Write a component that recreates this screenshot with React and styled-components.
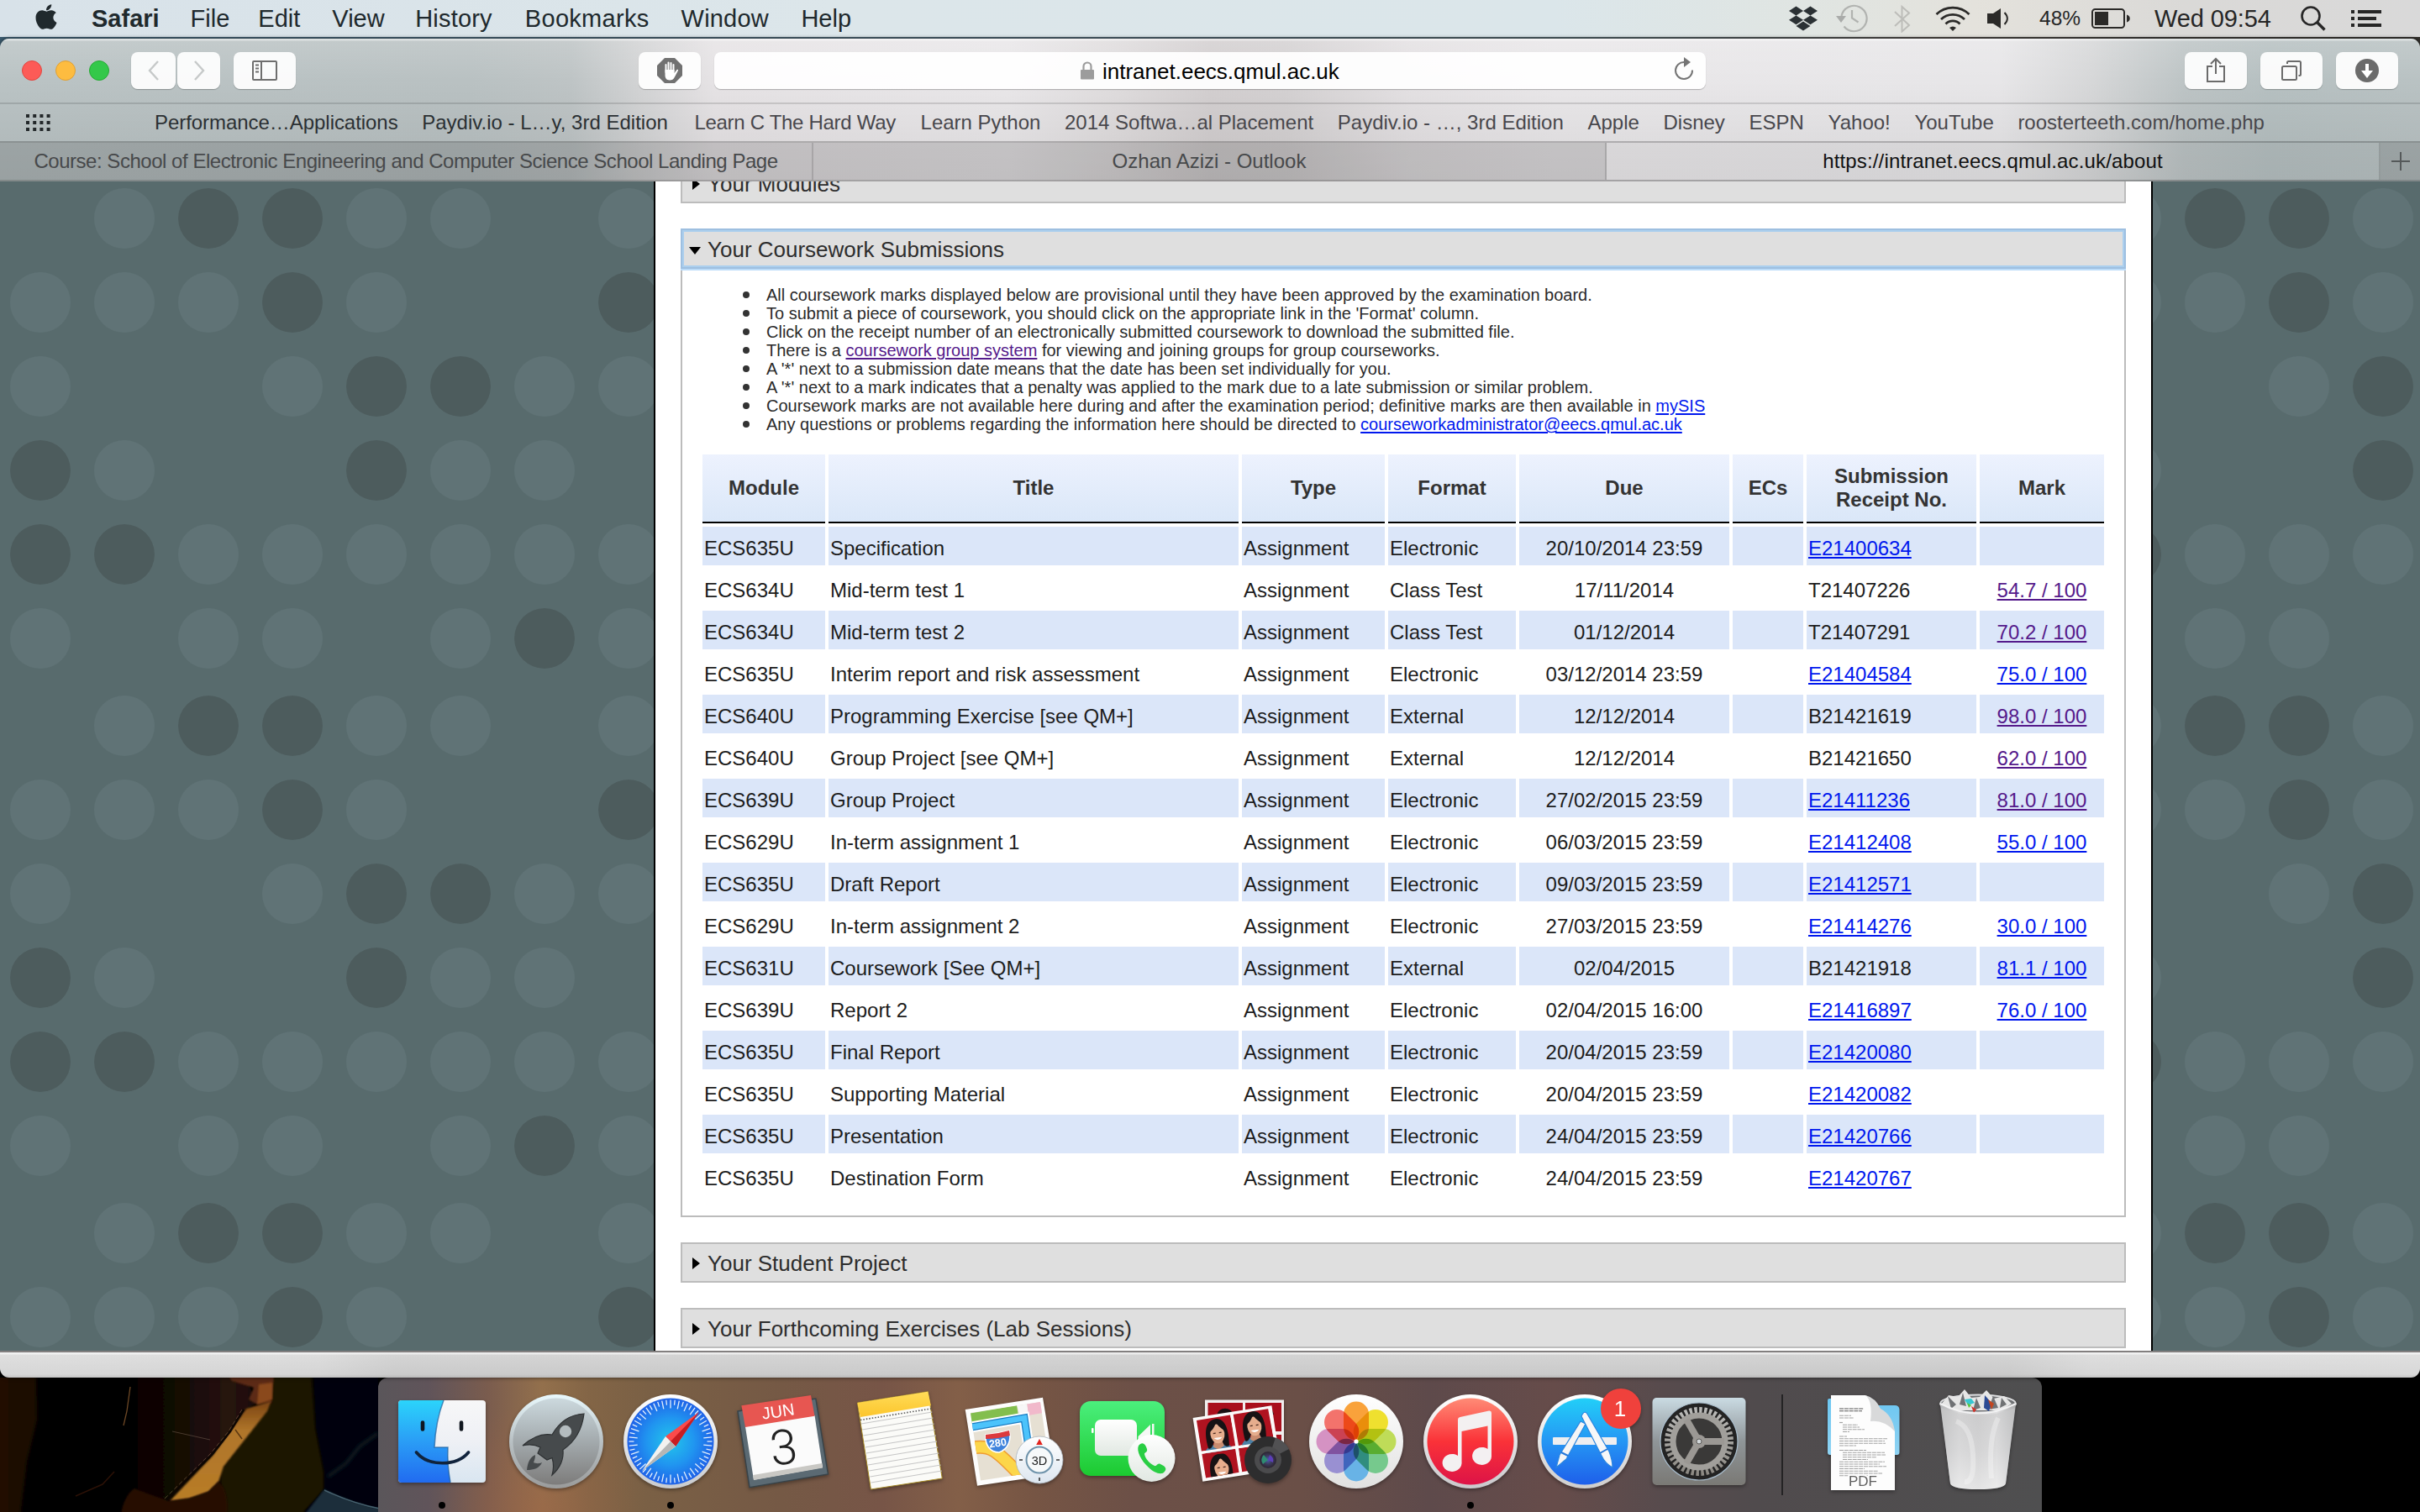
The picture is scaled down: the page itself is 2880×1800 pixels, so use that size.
import React from "react";
import styled, { createGlobalStyle, css } from "styled-components";
import { FaApple, FaDropbox } from "react-icons/fa";

const ui = `"Liberation Sans", Arial, sans-serif`;

const Global = createGlobalStyle`
  *, *::before, *::after { box-sizing: border-box; }
  html, body { margin: 0; padding: 0; }
  body { width: 2880px; height: 1800px; overflow: hidden; background: #000; font-family: ${ui}; }
`;

/* ---------- desktop ---------- */

const Desktop = styled.div`
  position: relative;
  width: 2880px;
  height: 1800px;
  display: flex;
  flex-direction: column;
  overflow: hidden;
  background: linear-gradient(90deg, #3c5c70, #4a5f6b 45%, #4c5e64 65%, #4c4743 80%, #3a3835 88%, #33312d) top / 100% 60px no-repeat, #000;
`;

const Wallpaper = styled.svg`
  position: absolute;
  left: 0;
  bottom: 0;
`;

const MenuBar = styled.header`
  display: flex;
  align-items: center;
  justify-content: space-between;
  height: 44px;
  flex: none;
  padding: 0 46px 0 42px;
  color: #20292d;
  background: linear-gradient(90deg, #d8e2e9 0, #dce6ea 1000px, #dbe6ea 1850px, #e0e5e2 2150px, #e4e2dc 2350px, #dad9d7 2600px, #d9d9d9 100%);
`;

const MenuGroup = styled.nav`
  display: flex;
  align-items: center;
`;

const AppleMark = styled(FaApple)`
  width: 30px;
  height: 34px;
  margin: -4px 0 0 -2px;
`;

const MenuItem = styled.span`
  margin-left: ${(p) => p.$gap}px;
  font-size: 29px;
  line-height: 44px;
  letter-spacing: ${(p) => p.$track || 0}px;
  font-weight: ${(p) => (p.$bold ? 700 : 400)};
`;

const StatusGroup = styled.div`
  display: flex;
  align-items: center;
  color: #262626;
  svg { display: block; flex: none; }
`;

const Battery = styled.span`
  width: 52px;
  margin: 0 10px 0 36px;
  font-size: 24.5px;
  line-height: 44px;
  white-space: nowrap;
`;

const Clock = styled.span`
  width: 139px;
  margin: 0 35px 0 29px;
  font-size: 29px;
  line-height: 44px;
  letter-spacing: -0.1px;
  white-space: nowrap;
`;

/* ---------- browser window ---------- */

const Window = styled.main`
  position: relative;
  z-index: 1;
  flex: none;
  display: flex;
  flex-direction: column;
  width: 2880px;
  height: 1594px;
  margin-top: 2px;
  border-radius: 11px;
  overflow: hidden;
  box-shadow: 0 0 5px rgba(0, 0, 0, 0.6);
`;

const Chrome = styled.div`
  flex: none;
  display: flex;
  flex-direction: column;
  height: 170px;
  background:
    linear-gradient(180deg, rgba(255, 255, 255, 0.5) 0, rgba(255, 255, 255, 0.5) 2px, rgba(255, 255, 255, 0.14) 3px, rgba(255, 255, 255, 0) 50px, rgba(0, 0, 0, 0.045) 122px, rgba(0, 0, 0, 0.06) 170px),
    linear-gradient(90deg, #bac3c4 0, #b9c1c2 560px, #bec4c5 680px, #d2d3d4 760px, #e6e3e5 850px, #e9e7e9 1200px, #dfdcdd 1330px, #d3cfd0 1440px, #d4d1d2 1530px, #e4e1e3 1680px, #e9e7e9 1850px, #e7e6e8 2380px, #d6d7d8 2490px, #bdc4c5 2600px, #b6c0c1 2700px, #b9c2c3 100%);
`;

const Toolbar = styled.div`
  display: flex;
  align-items: center;
  height: 78px;
  padding: 0 26px;
  border-bottom: 2px solid rgba(0, 0, 0, 0.13);
`;

const Light = styled.i`
  width: 24px;
  height: 24px;
  margin-right: 16px;
  border-radius: 50%;
  background: ${(p) => p.$fill};
  border: 1px solid ${(p) => p.$rim};
`;

const ToolButton = styled.button`
  display: flex;
  align-items: center;
  justify-content: center;
  width: ${(p) => p.$w || 74}px;
  height: 44px;
  margin: 0 0 0 ${(p) => p.$gap ?? 16}px;
  padding: 0;
  border: 0;
  border-radius: 8px;
  background: rgba(255, 255, 255, 0.92);
  box-shadow: 0 1px 1px rgba(0, 0, 0, 0.25);
`;

const Address = styled.div`
  display: flex;
  align-items: center;
  width: 1180px;
  height: 44px;
  margin-left: 16px;
  padding: 0 14px 0 435px;
  border-radius: 8px;
  background: rgba(255, 255, 255, 0.93);
  box-shadow: 0 1px 1px rgba(0, 0, 0, 0.25);
  color: #000;
  font-size: 26px;
  line-height: 44px;
  span { margin-left: 9px; padding-top: 1px; }
  svg:last-child { margin-left: auto; }
`;

const BookmarkBar = styled.div`
  display: flex;
  align-items: center;
  height: 46px;
  padding-left: 31px;
  border-bottom: 2px solid rgba(0, 0, 0, 0.22);
`;

const Bookmarks = styled.nav`
  display: flex;
  justify-content: space-between;
  width: 2511px;
  margin-left: 124px;
  font-size: 24px;
  line-height: 44px;
  white-space: nowrap;
  color: #48474c;
`;

const Bookmark = styled.span`
  margin-left: ${(p) => p.$nudge || 0}px;
  color: ${(p) => (p.$dark ? "#2b3033" : "inherit")};
  letter-spacing: ${(p) => p.$track || 0}px;
`;

const TabBar = styled.div`
  display: flex;
  height: 46px;
  border-bottom: 2px solid rgba(0, 0, 0, 0.25);
`;

const Tab = styled.div`
  width: ${(p) => p.$w}px;
  flex: none;
  display: flex;
  align-items: center;
  justify-content: center;
  border-right: 2px solid rgba(0, 0, 0, 0.13);
  background: ${(p) => (p.$active ? "rgba(0,0,0,.025)" : "rgba(0,0,0,.12)")};
  color: ${(p) => (p.$active ? "#111" : "#47494b")};
  font-size: 24px;
  line-height: 44px;
  letter-spacing: ${(p) => p.$track || 0}px;
  white-space: nowrap;
  &:last-child { border-right: 0; }
`;

/* ---------- page ---------- */

const Viewport = styled.div`
  display: flex;
  height: 1392px;
  flex: none;
  overflow: hidden;
  background: #586b6d;
`;

const Gutter = styled.svg`
  display: block;
  flex: none;
`;

const Page = styled.section`
  width: 1784px;
  height: 1392px;
  flex: none;
  padding: 0 30px;
  overflow: hidden;
  border: solid #000;
  border-width: 0 2px;
  background: #fff;
`;

const Header = styled.h3`
  position: relative;
  z-index: 1;
  display: flex;
  align-items: center;
  height: 48px;
  margin: 30px 0 0;
  padding: 2px 0 0 7px;
  border: 2px solid #bcbcbc;
  background: #dfdfdf;
  color: #2d2d2d;
  font-size: 26px;
  font-weight: 400;
  line-height: 42px;
  svg { width: 16px; margin-right: 7px; }
  ${(p) => p.$clipped && css`margin-top: -22px;`}
  ${(p) => p.$focus && css`
    border-color: #9ebfe0;
    box-shadow: inset 0 0 0 2px #abcfee, 0 2px 0 #bcdcf8;
  `}
`;

const Panel = styled.div`
  padding: 20px;
  border: 2px solid #bcbcbc;
  border-top: 0;
`;

const Notes = styled.ul`
  margin: 0 0 21px;
  padding: 0;
  list-style: none;
  color: #2a2a2a;
  font-size: 20px;
  line-height: 22px;
`;

const Note = styled.li`
  display: flex;
  align-items: center;
  height: 22px;
  padding-left: 52px;
  white-space: pre;
  &::before {
    content: "";
    width: 8px;
    height: 8px;
    margin-right: 20px;
    border-radius: 50%;
    background: #333;
  }
`;

const Link = styled.a`
  color: ${(p) => (p.$visited ? "#551a8b" : "#0018ee")};
  text-decoration: underline;
  text-decoration-thickness: 2px;
  text-underline-offset: 2px;
`;

const Table = styled.table`
  width: 1676px;
  table-layout: fixed;
  border-collapse: separate;
  border-spacing: 4px;
  color: #1c1c1c;
  font-size: 24px;
`;

const Th = styled.th`
  height: 82px;
  padding: 0;
  border-bottom: 2px solid #000;
  background: linear-gradient(180deg, #edf2fe, #dae7f8);
  color: #333;
  font-weight: 700;
  line-height: 28px;
`;

const Td = styled.td`
  height: 46px;
  padding: 6px 2px 0;
  line-height: 40px;
  text-align: ${(p) => (p.$center ? "center" : "left")};
  white-space: nowrap;
`;

const Tr = styled.tr`
  &:nth-child(odd) td { background: #dbe6f9; }
`;

const StatusBar = styled.div`
  height: 32px;
  flex: none;
  border-top: 2px solid #827f7f;
  background:
    linear-gradient(180deg, rgba(255, 255, 255, 0.6) 0, rgba(255, 255, 255, 0.6) 2px, rgba(255, 255, 255, 0.1) 3px, rgba(0, 0, 0, 0.02) 26px, rgba(0, 0, 0, 0.1) 30px),
    linear-gradient(90deg, #dbdbdb 0, #d9d9d9 380px, #cfcfcf 470px, #cecece 2390px, #dadada 2490px, #dcdcdc 100%);
`;

/* ---------- dock ---------- */

const DockArea = styled.footer`
  position: relative;
  display: flex;
  justify-content: center;
  height: 160px;
  flex: none;
`;

const Dock = styled.div`
  display: flex;
  width: 1980px;
  height: 160px;
  padding: 12px 8px 0;
  border-radius: 12px 12px 0 0;
  background:
    radial-gradient(ellipse 120px 130px at 190px 160px, rgba(160, 100, 70, 0.5), transparent),
    linear-gradient(90deg, #5a565a 0, #60545a 60px, #7a5c4e 130px, #93704c 195px, #836546 250px, #7a6045 320px, #755945 480px, #775547 600px, #835f48 690px, #765544 780px, #6c5047 900px, #6a4f47 1100px, #5e4a4b 1250px, #664c4a 1400px, #574b4d 1530px, #504b4d 1640px, #4f4f50 100%);
`;

const DockItem = styled.div`
  width: 136px;
  flex: none;
  display: flex;
  flex-direction: column;
  align-items: center;
  svg { display: block; flex: none; overflow: visible; filter: drop-shadow(0 2px 2px rgba(0, 0, 0, 0.35)); }
`;

const Running = styled.i`
  width: 8px;
  height: 8px;
  margin-top: 8px;
  border-radius: 50%;
  background: #000;
`;

const Divider = styled.i`
  width: 2px;
  height: 120px;
  margin: 8px 28px 0 30px;
  background: #242324;
`;

/* ---------- data ---------- */

// label, left gap, tracking
const menus = [
  ["File", 37, 0],
  ["Edit", 34, 0],
  ["View", 38, 0],
  ["History", 36.5, 0.2],
  ["Bookmarks", 39, 0.3],
  ["Window", 38, 0.2],
  ["Help", 38.5, 0],
];

// label, dark text, tracking, extra left gap
const bookmarks = [
  ["Performance…Applications", true, -0.05],
  ["Paydiv.io - L…y, 3rd Edition", true],
  ["Learn C The Hard Way", false, -0.3, 3],
  ["Learn Python", false, 0, 1],
  ["2014 Softwa…al Placement"],
  ["Paydiv.io - …, 3rd Edition"],
  ["Apple"],
  ["Disney"],
  ["ESPN"],
  ["Yahoo!"],
  ["YouTube"],
  ["roosterteeth.com/home.php"],
];

const widths = [146, 488, 170, 152, 250, 84, 202, 148];
const heads = ["Module", "Title", "Type", "Format", "Due", "ECs", "Submission Receipt No.", "Mark"];

// module, title, format, due, receipt, mark, mark visited
const rows = [
  ["ECS635U", "Specification", "Electronic", "20/10/2014 23:59", "E21400634"],
  ["ECS634U", "Mid-term test 1", "Class Test", "17/11/2014", "T21407226", "54.7 / 100", true],
  ["ECS634U", "Mid-term test 2", "Class Test", "01/12/2014", "T21407291", "70.2 / 100", true],
  ["ECS635U", "Interim report and risk assessment", "Electronic", "03/12/2014 23:59", "E21404584", "75.0 / 100"],
  ["ECS640U", "Programming Exercise [see QM+]", "External", "12/12/2014", "B21421619", "98.0 / 100", true],
  ["ECS640U", "Group Project [see QM+]", "External", "12/12/2014", "B21421650", "62.0 / 100", true],
  ["ECS639U", "Group Project", "Electronic", "27/02/2015 23:59", "E21411236", "81.0 / 100", true],
  ["ECS629U", "In-term assignment 1", "Electronic", "06/03/2015 23:59", "E21412408", "55.0 / 100"],
  ["ECS635U", "Draft Report", "Electronic", "09/03/2015 23:59", "E21412571"],
  ["ECS629U", "In-term assignment 2", "Electronic", "27/03/2015 23:59", "E21414276", "30.0 / 100"],
  ["ECS631U", "Coursework [See QM+]", "External", "02/04/2015", "B21421918", "81.1 / 100"],
  ["ECS639U", "Report 2", "Electronic", "02/04/2015 16:00", "E21416897", "76.0 / 100"],
  ["ECS635U", "Final Report", "Electronic", "20/04/2015 23:59", "E21420080"],
  ["ECS635U", "Supporting Material", "Electronic", "20/04/2015 23:59", "E21420082"],
  ["ECS635U", "Presentation", "Electronic", "24/04/2015 23:59", "E21420766"],
  ["ECS635U", "Destination Form", "Electronic", "24/04/2015 23:59", "E21420767"],
];

/* ---------- page background dots ---------- */

const dotRows = [".LDDLL.L", "LLLDL..D", "L..LDDLL", "DL..DLL.", "DDLLLLLL", "L.LL.LDL"];

function Dots({ id, width, offset }) {
  return (
    <Gutter width={width} height="1392">
      <defs>
        <pattern id={id} width="796" height="604" patternUnits="userSpaceOnUse" patternTransform={`translate(${-offset} -4)`}>
          {dotRows.map((line, r) =>
            [...line].map((c, i) =>
              c === "." ? null : (
                <circle key={`${r}-${i}`} cx={48 + i * 100} cy={48 + r * 100} r="36" fill={c === "D" ? "#4d5c5d" : "#607376"} />
              )
            )
          )}
        </pattern>
      </defs>
      <rect width={width} height="1392" fill="#586b6d" />
      <rect width={width} height="1392" fill={`url(#${id})`} />
    </Gutter>
  );
}

const ClosedArrow = () => (
  <svg viewBox="0 0 16 16" height="16"><path d="M5 1v14l9-7z" fill="#000" /></svg>
);
const OpenArrow = () => (
  <svg viewBox="0 0 16 16" height="16"><path d="M1 5h14l-7 9z" fill="#000" /></svg>
);

/* ---------- menu bar icons ---------- */

const TimeMachine = () => (
  <svg width="38" height="34" viewBox="0 0 38 34" style={{ marginLeft: 22 }} fill="none" stroke="#b1b3b0" strokeWidth="2.200">
    <path d="M6.500 14A15.200 15.200 0 1 1 9.500 26.500" />
    <path d="M19 7v9.500l7.500 5" />
    <path d="M0 14h12l-6 8z" fill="#a9aba9" stroke="none" />
  </svg>
);
const BluetoothIcon = () => (
  <svg width="20" height="34" viewBox="0 0 20 34" style={{ marginLeft: 31 }} fill="none" stroke="#bdbdb9" strokeWidth="2">
    <path d="M1 9l17 16-8.500 7.500V3L18 10.500 1 26" />
  </svg>
);
const WifiIcon = () => (
  <svg width="42" height="30" viewBox="0 0 42 30" style={{ marginLeft: 29 }} fill="none" stroke="#2b2a28" strokeWidth="2.800">
    <path d="M1.500 10a28 28 0 0 1 39 0" />
    <path d="M7 16a20 20 0 0 1 28 0" />
    <path d="M12.500 21.500a12 12 0 0 1 17 0" />
    <path d="M17 26q4-3 8 0l-4 4z" fill="#2b2a28" stroke="none" />
  </svg>
);
const SpeakerIcon = () => (
  <svg width="26" height="26" viewBox="0 0 26 26" style={{ marginLeft: 20 }}>
    <path d="M0 7h7l9-6v24l-9-6H0z" fill="#2b2a28" />
    <path d="M20.500 6c4.500 4.500 4.500 9.500 0 14" fill="none" stroke="#2b2a28" strokeWidth="2" />
  </svg>
);
const BatteryIcon = () => (
  <svg width="46" height="24" viewBox="0 0 46 24">
    <rect x="1" y="1" width="38" height="22" rx="3.500" fill="none" stroke="#2b2a28" strokeWidth="2" />
    <rect x="4" y="4" width="16" height="16" fill="#2b2a28" />
    <path d="M42 7.500c5 1 5 8 0 9z" fill="#2b2a28" />
  </svg>
);
const SearchIcon = () => (
  <svg width="30" height="30" viewBox="0 0 30 30" fill="none" stroke="#262626" strokeWidth="2.600">
    <circle cx="12" cy="12" r="10.500" />
    <path d="M19.500 19.500l9 9" strokeWidth="3.400" />
  </svg>
);
const ListIcon = () => (
  <svg width="36" height="20" viewBox="0 0 36 20" style={{ marginLeft: 30 }} fill="#262626">
    <path d="M0 0h4v4H0zM0 8h4v4H0zM0 16h4v4H0zM8 0h28v4H8zM8 8h22v4H8zM8 16h28v4H8z" />
  </svg>
);

/* ---------- toolbar icons ---------- */

const Chevron = ({ right }) => (
  <svg width="16" height="24" viewBox="0 0 16 24" fill="none" stroke="#c6c9c9" strokeWidth="2.400">
    <path d={right ? "M3 1l10 11L3 23" : "M13 1L3 12l10 11"} />
  </svg>
);
const SidebarIcon = () => (
  <svg width="30" height="24" viewBox="0 0 30 24" fill="none" stroke="#6e6e6e" strokeWidth="2">
    <rect x="1" y="1" width="28" height="22" rx="1" />
    <path d="M11 1v22M4 5.500h4M4 9.500h4M4 13.500h4" />
  </svg>
);
const HandIcon = () => (
  <svg width="30" height="30" viewBox="0 0 30 30">
    <path d="M9 0h12l9 9v12l-9 9H9l-9-9V9z" fill="#717171" />
    <path d="M10.500 17V8M13.500 15V5.500M16.500 15V6M19.500 16V8" stroke="#fff" strokeWidth="2" strokeLinecap="round" fill="none" />
    <path d="M9.500 14h11v4l3-4c1-.8 2 0 1.500 1L21 22.500c-1.500 3-3.500 4-6 4-4 0-5.500-3-5.500-6z" fill="#fff" />
  </svg>
);
const LockIcon = () => (
  <svg width="18" height="22" viewBox="0 0 18 22">
    <path d="M4.500 11V6a4.500 4.500 0 0 1 9 0v5" fill="none" stroke="#9c9c9c" strokeWidth="2.200" />
    <rect x="1" y="10" width="16" height="11.500" rx="1" fill="#9c9c9c" />
  </svg>
);
const ReloadIcon = () => (
  <svg width="24" height="28" viewBox="0 0 24 28" style={{ marginTop: -4 }}>
    <path d="M12.500 6A10 10 0 1 0 22 15.500" fill="none" stroke="#757575" strokeWidth="2" />
    <path d="M12 0l8 6-8 6z" fill="#757575" />
  </svg>
);
const ShareIcon = () => (
  <svg width="22" height="30" viewBox="0 0 22 30" style={{ marginTop: -2 }} fill="none" stroke="#6b6b6b" strokeWidth="2">
    <path d="M7 11H1v18h20V11h-6M11 20V2M5 8l6-6 6 6" />
  </svg>
);
const OverviewIcon = () => (
  <svg width="24" height="24" viewBox="0 0 24 24" fill="none" stroke="#6b6b6b" strokeWidth="2">
    <rect x="1" y="7" width="17" height="16" rx="1.500" />
    <path d="M7 4V2.500Q7 1 8.500 1h13Q23 1 23 2.500v14Q23 18 21.500 18H20.500" />
  </svg>
);
const DownloadIcon = () => (
  <svg width="28" height="28" viewBox="0 0 28 28">
    <circle cx="14" cy="14" r="14" fill="#6b6b6b" />
    <path d="M12 6h4v8h5l-7 9-7-9h5z" fill="#fff" />
  </svg>
);
const GridIcon = () => (
  <svg width="29" height="20" viewBox="0 0 29 20" fill="#23282a">
    {[0, 8, 16].map((y) => [0, 8.200, 16.400, 24.600].map((x) => <rect key={`${x}-${y}`} x={x} y={y} width="4" height="4" />))}
  </svg>
);
const PlusIcon = () => (
  <svg width="22" height="22" viewBox="0 0 22 22"><path d="M10 0h2v10h10v2H12v10h-2V12H0v-2h10z" fill="#55595a" /></svg>
);

/* ---------- dock icons: 136 x 128, centred on 68,64 ---------- */

const Art = ({ children }) => <svg width="136" height="128" viewBox="0 0 136 128">{children}</svg>;

const Grad = ({ id, stops, h }) => (
  <linearGradient id={id} x1="0" y1="0" x2={h ? 1 : 0} y2={h ? 0 : 1}>
    {stops.map((s, i) => <stop key={i} offset={i / (stops.length - 1)} stopColor={s} />)}
  </linearGradient>
);

const Finder = () => (
  <Art>
    <defs>
      <Grad id="fi1" stops={["#2bd4fb", "#2a9df6", "#216bf0"]} />
      <Grad id="fi2" stops={["#f7f7f8", "#eef0f5", "#d9e6f1"]} />
    </defs>
    <rect x="16" y="15" width="104" height="98" rx="4" fill="url(#fi2)" />
    <path d="M20 15H70C63 33 60 50 59 71H75Q74 92 78 113H20a4 4 0 0 1-4-4V19a4 4 0 0 1 4-4z" fill="url(#fi1)" />
    <path d="M70 15C63 33 60 50 59 71H75Q74 92 78 113" fill="none" stroke="#1c5f9c" strokeWidth="1.500" opacity=".7" />
    <path d="M37.500 77c14 17 48 17 62 0" fill="none" stroke="#10233c" strokeWidth="3.600" strokeLinecap="round" />
    <path d="M45 41.500v8M91 41.500v8" stroke="#10161e" strokeWidth="4.600" strokeLinecap="round" />
  </Art>
);

const Launchpad = () => (
  <Art>
    <defs>
      <Grad id="la1" stops={["#ccd9de", "#a3aaad", "#7d7c7b"]} />
      <Grad id="la2" stops={["#e9f9fd", "#b9c1c4", "#9a9b9b"]} />
    </defs>
    <circle cx="68" cy="64" r="56" fill="url(#la2)" />
    <circle cx="68" cy="64" r="51.500" fill="url(#la1)" />
    <path d="M101 31C84 32 72 40 63 56C51 54 38 60 28 69C36 67 43 68 49 71L46 78L57 86L63 83.500C65 90 65 97 63 104C72 96 77 85 76 74C92 63 99 48 101 31z" fill="#464a4c" stroke="#2e3133" strokeWidth="1.200" />
    <circle cx="79" cy="52" r="7.200" fill="#b4bcbf" />
    <path d="M43 80C36 83 34 90 33 98C41 98 48 96 51 89C47 91 43 90 41 89C42 86 43 84 43 80z" fill="#464a4c" />
  </Art>
);

const Safari = () => (
  <Art>
    <defs>
      <radialGradient id="sa1"><stop offset="0" stopColor="#22c6ea" /><stop offset=".55" stopColor="#2095f0" /><stop offset="1" stopColor="#1f62e8" /></radialGradient>
      <Grad id="sa2" stops={["#ffffff", "#c9cbce"]} />
    </defs>
    <circle cx="68" cy="64" r="56" fill="url(#sa2)" />
    <circle cx="68" cy="64" r="51.500" fill="url(#sa1)" />
    {Array.from({ length: 60 }, (_, i) => (
      <path key={i} d={`M68 14.500v${i % 2 ? 6 : 10}`} stroke="#e4f0fb" strokeWidth="1.300" transform={`rotate(${i * 6} 68 64)`} />
    ))}
    <path d="M102 29L62 58L74 70z" fill="#fb4a4a" />
    <path d="M102 29L68 64L74 70z" fill="#c81d21" />
    <path d="M34 99L62 58L74 70z" fill="#f2f2f0" />
    <path d="M34 99L68 64L74 70z" fill="#b4b6b5" />
  </Art>
);

const Calendar = () => (
  <Art>
    <path d="M12 28L104.800 13L119.500 103L26 118.700z" fill="#5b6a73" stroke="#384349" strokeWidth="1.500" />
    <path d="M20.900 46L103.500 33L113 95L31 109.700z" fill="#fbfbfb" />
    <path d="M30.200 104L112.200 90L113 95.500L31 110z" fill="#c9c8c4" />
    <path d="M16.400 21.300L99 9L103.500 33.700L20.900 47z" fill="#e75651" />
    <text transform="translate(61 35) rotate(-8.500)" textAnchor="middle" fontFamily={ui} fontSize="20" fill="#fff">JUN</text>
    <text transform="translate(69 91) rotate(-7)" textAnchor="middle" fontFamily="Roboto, sans-serif" fontWeight="300" fontSize="58" fill="#222">3</text>
  </Art>
);

const NotesApp = () => (
  <Art>
    <defs><Grad id="no1" stops={["#ffdc58", "#fcc52c"]} /></defs>
    <path d="M18.400 18L102.300 4.700L119.300 108L34.400 121z" fill="#fbfbf8" stroke="#a68a25" strokeWidth="1" />
    {Array.from({ length: 11 }, (_, i) => (
      <path key={i} d={`M${22.800 + i * 1.180} ${43 + i * 7}L${107.300 + i * 1.150} ${29 + i * 7}`} stroke="#c6c6c6" strokeWidth="1.200" />
    ))}
    <path d="M21.900 38.500L106 25" stroke="#555" strokeWidth="1.600" strokeDasharray="1.500 2" />
    <path d="M18.400 18L102.300 4.700L105.900 21.300L21.900 35z" fill="url(#no1)" />
  </Art>
);

const Maps = () => (
  <Art>
    <defs><clipPath id="ma1"><path d="M17 30L100 17L112 98L29 110.500z" /></clipPath><Grad id="ma2" stops={["#ffffff", "#dde6f0"]} /></defs>
    <path d="M10.700 26L103 11.700L118 103L25 116.700z" fill="#fdfdfd" />
    <g clipPath="url(#ma1)">
      <path d="M10 10h110v110H10z" fill="#e6e0d3" />
      <path d="M14 31L72 21L74 34L18 44z" fill="#83be4e" />
      <path d="M72 20L84 18L88 40L76 34z" fill="#f7f7f7" />
      <path d="M84 17L100 15L103 30L86 33z" fill="#f1b9cb" />
      <path d="M12 48L81 36L88 84" fill="none" stroke="#fff" strokeWidth="13" />
      <path d="M12 48L81 36L88 84" fill="none" stroke="#1b7ec4" strokeWidth="9" />
      <path d="M12 48L81 36L88 84" fill="none" stroke="#4cc3fb" strokeWidth="6.500" />
      <path d="M18 72C44 66 52 80 84 112" fill="none" stroke="#ef9c32" strokeWidth="16" />
      <path d="M18 72C44 66 52 80 84 112" fill="none" stroke="#fcd64a" strokeWidth="13" />
    </g>
    <path d="M35 56Q49 55 63 51C66 62 62 73 51 77C40 77 34 68 35 56z" fill="#3f83dc" stroke="#fff" strokeWidth="1.500" />
    <path d="M35 56Q49 55 63 51L64 57Q49 61 35 61z" fill="#dc3a3c" />
    <text transform="translate(50 70) rotate(-8)" textAnchor="middle" fontFamily={ui} fontWeight="700" fontSize="12.500" fill="#fff">280</text>
    <circle cx="99" cy="86" r="28" fill="url(#ma2)" stroke="#a9b2bb" strokeWidth=".8" />
    <circle cx="99" cy="86" r="15.500" fill="#f7f9fa" stroke="#6f93ab" strokeWidth="2" />
    <path d="M99 61l3.800 7h-7.600z" fill="#e2231d" />
    <path d="M75 86h4M119 86h4M99 107v4" stroke="#333" strokeWidth="1.600" />
    <text x="99" y="91.500" textAnchor="middle" fontFamily={ui} fontSize="14.500" fill="#222">3D</text>
  </Art>
);

const FaceTime = () => (
  <Art>
    <defs><Grad id="fa1" stops={["#4bef7d", "#1cca30"]} /><Grad id="fa2" stops={["#ffffff", "#e1e8e2"]} /></defs>
    <rect x="11" y="16" width="101" height="89" rx="13" fill="url(#fa1)" />
    <rect x="29" y="38" width="50" height="43" rx="7" fill="url(#fa2)" />
    <path d="M80.500 58L95 44V66L80.500 66zM97 43h2.500v24H97z" fill="#f5f8f5" />
    <rect x="25" y="48" width="2.500" height="6" rx="1" fill="#fff" />
    <circle cx="96.500" cy="84" r="28" fill="url(#fa2)" />
    <path d="M81 69c4-5 8-3 10 4 1 4-3 4-3 6 1 6 7 12 12 14 3 1 3-4 7-2 7 3 8 6 4 10-4 3-12 0-18-6-9-8-15-20-12-26z" fill="#29ce43" />
  </Art>
);

const Face = ({ x, y }) => (
  <g transform={`translate(${x} ${y}) rotate(-8)`}>
    <path d="M-17 20C-14 8 14 8 17 20z" fill="#4a7ea4" />
    <path d="M-12 15C-15 -6 -11 -19 2 -19C14 -18 15 0 13 15C9 17 6 12 5 9L-5 9C-6 12 -9 17 -12 15z" fill="#171214" />
    <path d="M-4 7h9l2 7-7 4-6-4z" fill="#c98c6f" />
    <ellipse cx="1" cy="-1" rx="8.500" ry="11.500" fill="#e6ad8d" />
    <path d="M-9 -3C-5 -6 -1 -9 1 -15C3 -9 7 -7 10 -3C12 -16 6 -18 1 -18C-6 -18 -10 -12 -9 -3z" fill="#171214" />
    <path d="M-4 3.500Q1 9 6 3.500z" fill="#fff" />
    <path d="M-4 -2h3M3 -2h3" stroke="#4a2a20" strokeWidth="1.300" />
  </g>
);

const PhotoBooth = () => (
  <Art>
    <defs>
      <radialGradient id="ph1"><stop offset="0" stopColor="#4a5fb0" /><stop offset=".5" stopColor="#3c3b5c" /><stop offset="1" stopColor="#2c2430" /></radialGradient>
      <clipPath id="ph2"><path d="M14 39L100 25L111 93L25 107.500z" /></clipPath>
      <clipPath id="ph3"><path d="M14 39L54 32L60.500 73L20 80zM58 31.500L100 24L106 65L64 72zM20 82L61 76L66 103L25 109z" /></clipPath>
    </defs>
    <path d="M24 14.500h94v62H24z" fill="#f0eeee" />
    <path d="M27.500 18H69v30H27.500zM72 18h43v34H72zM72 56h43v17H72z" fill="#a90f1c" />
    <path d="M38 33C40 22 56 22 58 33zM86 28C88 20 104 20 106 32z" fill="#1a1113" />
    <path d="M9.600 36L103.400 21.300L115 97L21.300 111.700z" fill="#fbfafa" />
    <g clipPath="url(#ph2)">
      <path d="M13 38L54 31.500L61 69L19 76zM57.500 31L99 24.500L106 62L64 69z" fill="#b01320" />
      <path d="M19 79L60 72.500L65 104L25 109zM64 72L106 66L111 98L68 103z" fill="#b01320" />
      <g clipPath="url(#ph3)"><Face x="38" y="56" /><Face x="82" y="47" /><Face x="43" y="97" /></g>
      <path d="M55 28L68 108M15 78L112 63.500" stroke="#fbfafa" strokeWidth="3" />
    </g>
    <circle cx="99" cy="86" r="28" fill="#2d2d2e" />
    <path d="M99 86L108 59.500A28 28 0 0 1 124 73z" fill="#515153" />
    <circle cx="99" cy="86" r="16" fill="#4b4b4d" />
    <circle cx="99" cy="86" r="10" fill="url(#ph1)" />
    <path d="M94 80a8 8 0 0 0-1 11l6-5z" fill="#2f8c72" /><path d="M101 80a8 8 0 0 1 4 9l-6-3z" fill="#5c3fb8" />
  </Art>
);

const petals = ["#f9a23b", "#efe02f", "#bfdc58", "#76c98d", "#68b3e6", "#9990d2", "#d592c3", "#f3736c"];
const PhotosApp = () => (
  <Art>
    <defs><Grad id="pt1" stops={["#ffffff", "#e1e1e0"]} /></defs>
    <circle cx="68" cy="64" r="56" fill="url(#pt1)" />
    <g style={{ isolation: "isolate" }}>
      {petals.map((c, i) => (
        <rect key={i} x="53" y="16.500" width="30" height="46" rx="15" fill={c} transform={`rotate(${i * 45} 68 64)`} style={{ mixBlendMode: "multiply" }} />
      ))}
    </g>
    <circle cx="68" cy="64" r="2.600" fill="#fff" />
  </Art>
);

const ITunes = () => (
  <Art>
    <defs><Grad id="it1" stops={["#ff8b76", "#fa3238", "#dd1347"]} /><Grad id="it2" stops={["#ffffff", "#c9c8cb"]} /></defs>
    <circle cx="68" cy="64" r="56" fill="url(#it2)" />
    <circle cx="68" cy="64" r="51.500" fill="url(#it1)" />
    <path d="M53 38Q53 35.500 55.500 35L90 27.500Q93 27 93 30V80A11.500 10.500 0 1 1 88.500 73V45.500L57.500 52V88A11.500 10.500 0 1 1 53 81z" fill="#f3f0f1" />
  </Art>
);

const AppStore = () => (
  <Art>
    <defs><Grad id="as1" stops={["#22cff8", "#2596f4", "#1e5fea"]} /><Grad id="as2" stops={["#ffffff", "#cfcdcc"]} /></defs>
    <circle cx="68" cy="64" r="56" fill="url(#as2)" />
    <circle cx="68" cy="64" r="51.500" fill="url(#as1)" />
    <rect x="30" y="59" width="76" height="9" rx="1" fill="#eeeef0" />
    <path d="M63 40L69 43L46 85L34 95L38 80z" fill="#f5f5f6" stroke="#2a86e0" strokeWidth="1.200" />
    <path d="M64 34Q68 25 72 33L97 76Q101 86 101 95Q92 90 88 81z" fill="#f7f7f8" stroke="#2a86e0" strokeWidth="1.200" />
    <path d="M40 77l8 4M86 78l9-5" stroke="#2477da" strokeWidth="2" />
    <circle cx="111" cy="25" r="24" fill="#f0413c" />
    <text x="110" y="34" textAnchor="middle" fontFamily={ui} fontSize="26" fill="#fff">1</text>
  </Art>
);

const Settings = () => (
  <Art>
    <defs><Grad id="se1" stops={["#cadbe3", "#8f9598", "#7a7975"]} /><Grad id="se2" stops={["#b9b9b7", "#8d8a84"]} /></defs>
    <rect x="12.500" y="12" width="111" height="104" rx="5" fill="url(#se1)" />
    <circle cx="68" cy="64" r="46" fill="#232323" stroke="#a9bccb" strokeWidth="1.200" />
    <circle cx="68" cy="64" r="37" fill="none" stroke="url(#se2)" strokeWidth="8" strokeDasharray="3.400 2.410" />
    <circle cx="68" cy="64" r="31" fill="#3a3938" stroke="#a19f9b" strokeWidth="7" />
    {[0, 120, 240].map((a) => <path key={a} d="M66 60H98V68H66z" fill="#9b9894" transform={`rotate(${a} 68 64)`} />)}
    <circle cx="68" cy="64" r="8" fill="#9b9894" />
    <circle cx="68" cy="64" r="3" fill="#d2d6d8" stroke="#5c5b59" />
  </Art>
);

// body-text lines of the thumbnail: indent, length
const pageLines = [
  [39, 29], [39, 27], [39, 0], [39, 14], [39, 17], [39, 0], [39, 4], [43, 18], [43, 20], [43, 26], [43, 8], [39, 0],
  [39, 9], [39, 57], [39, 54], [39, 55], [39, 20], [39, 0], [39, 32], [43, 50], [43, 51], [43, 40], [43, 30], [39, 54],
  [39, 48], [39, 56], [39, 30], [39, 46], [39, 51], [39, 44],
];

const Documents = () => (
  <Art>
    <defs><Grad id="do1" stops={["#6cc6f1", "#8fd3f3"]} /></defs>
    <path d="M25 15q0-2 2-2h6v8h72q5 0 5.500 5v51q0 3-3 3H28q-3 0-3-3z" fill="url(#do1)" />
    <path d="M29 9H70Q79 12 84 27Q101 38 105 52V122H29z" fill="#fdfdfd" />
    <path d="M70 9Q79 16 76 40Q92 38 105 52Q102 32 88 25Q82 12 70 9z" fill="#d8d9da" />
    {pageLines.map(([x, w], i) => (
      <path key={i} d={`M${x} ${25 + i * 2.750}h${w}`} stroke={i < 2 ? "#555" : "#a2a2a2"} strokeWidth="1.200" strokeDasharray="5 .8" />
    ))}
    <text x="67" y="117" textAnchor="middle" fontFamily={ui} fontSize="17" fill="#606060" stroke="#fdfdfd" strokeWidth="4" paintOrder="stroke">PDF</text>
  </Art>
);

const Trash = () => (
  <Art>
    <defs><Grad id="tr1" h stops={["#b4b5b7", "#d9d9da", "#cbcbcc", "#dfdfe0", "#adaeb0"]} /><Grad id="tr2" stops={["#cacacb", "#d8d8d9", "#f4f4f4"]} /></defs>
    <ellipse cx="68" cy="19" rx="45" ry="10.500" fill="#6f7174" stroke="#dcdddf" strokeWidth="2" />
    <path d="M24 20L33 9L44 11L52 2L60 12L70 11L78 3L87 13L99 10L108 19L96 27H38z" fill="#e6e6e6" />
    <path d="M32 10L42 20L36 25zM50 6L54 22L46 20zM86 10L92 24L80 26zM66 12l5 12-9 3zM96 12l6 8-8 4z" fill="#707275" />
    <path d="M52 14l8-1 4 5-8 3z" fill="#37c6d2" /><path d="M55 18l5 3-3 3z" fill="#5cc63c" />
    <path d="M76 9l8 9-3 10-6-4z" fill="#2b4a94" /><path d="M80 14l7 5-3 7z" fill="#c4461f" /><path d="M60 22l6 4-3 4z" fill="#d0342b" />
    <path d="M23 20Q68 42 113 20L101 114Q99 121 68 121Q37 121 35 114z" fill="url(#tr1)" />
    <path d="M24 24Q68 42 112 24L101 114Q99 121 68 121Q37 121 35 114z" fill="url(#tr2)" opacity=".6" />
    <path d="M42 40Q60 46 62 80T52 112M92 36Q80 60 84 108" fill="none" stroke="#fff" strokeWidth="6" opacity=".3" />
    <path d="M23 19Q68 42 113 19" fill="none" stroke="#f2f2f3" strokeWidth="2" />
  </Art>
);

const dock = [[Finder, true], [Launchpad], [Safari, true], [Calendar], [NotesApp], [Maps], [FaceTime], [PhotoBooth], [PhotosApp], [ITunes, true], [AppStore], [Settings]];

function DesktopArt() {
  return (
    <Wallpaper width="2880" height="160" viewBox="0 0 2880 160">
      <defs>
        <linearGradient id="w1" x1="0" x2="1"><stop offset="0" stopColor="#221202" /><stop offset="1" stopColor="#1a0d02" /></linearGradient>
        <linearGradient id="w2" x1="0" x2="1"><stop offset="0" stopColor="#000" /><stop offset=".35" stopColor="#0c0604" /><stop offset=".8" stopColor="#27130a" /><stop offset="1" stopColor="#1c0e07" /></linearGradient>
        <linearGradient id="w3" x1="0" x2="0" y1="0" y2="1"><stop offset="0" stopColor="#7a4313" /><stop offset=".3" stopColor="#b0762a" /><stop offset="1" stopColor="#b87c28" /></linearGradient>
        <filter id="soft"><feGaussianBlur stdDeviation="2" /></filter>
        <filter id="edge"><feGaussianBlur stdDeviation=".8" /></filter>
      </defs>
      <rect width="2880" height="160" fill="#000" />
      <path d="M-5 -5H43L44 50L32 100L24 165H-5z" fill="url(#w1)" filter="url(#soft)" />
      <path d="M320 -5H371L376 60L386 113V133L361 165H262L262 112L322 30z" fill="#1f1203" filter="url(#soft)" />
      <path d="M130 -5H290L306 30L292 38L253 93L200 147L145 165H130z" fill="url(#w2)" filter="url(#edge)" />
      <path d="M272 -2H326L323 30L306 32L296 26L302 12L276 4z" fill="#5b2a12" filter="url(#edge)" />
      <path d="M308 8L324 6L324 26L306 32z" fill="#8a4a1b" filter="url(#edge)" />
      <path d="M293 37L323 28L318 40L266 106L260 124L248 136L225 144L202 147L253 93L277 60z" fill="url(#w3)" filter="url(#edge)" />
      <path d="M280 62L288 73" stroke="#5c3812" strokeWidth="1.500" />
      <path d="M202 147L225 144L248 136L260 124Q272 134 270 162H144Q148 140 160 132Q180 140 202 147z" fill="#260d06" filter="url(#edge)" />
      <path d="M290 38L274 64L252 92L198 146" fill="none" stroke="#0d0603" strokeWidth="2.500" />
      <path d="M288 38L272 64L250 91L196 144" fill="none" stroke="#7c6048" strokeWidth=".9" strokeDasharray="5 3" opacity=".7" />
      <path d="M155 11L151 40L147 57" fill="none" stroke="#8a5a2e" strokeWidth="1.300" opacity=".8" />
      <path d="M90 141L122 127L136 112" fill="none" stroke="#4a1c0a" strokeWidth="1.500" opacity=".6" />
      <path d="M205 64L250 74" stroke="#6b574a" strokeWidth="1" opacity=".6" />
      <path d="M373 -2H450V160H361L386 133V113L376 60z" fill="#040608" filter="url(#edge)" />
      <path d="M386 133Q420 150 452 156V165H361z" fill="#1b2f3b" filter="url(#edge)" />
      <path d="M386 134Q420 150 452 156" fill="none" stroke="#46616e" strokeWidth="1.500" />
      <path d="M390 118L412 102L428 82L450 66" fill="none" stroke="#101c23" strokeWidth="4" filter="url(#soft)" />
    </Wallpaper>
  );
}

export default function App() {
  return (
    <Desktop>
      <Global />
      <DesktopArt />
      <MenuBar>
        <MenuGroup>
          <AppleMark />
          <MenuItem $bold $gap={39}>Safari</MenuItem>
          {menus.map(([m, gap, track]) => <MenuItem key={m} $gap={gap} $track={track}>{m}</MenuItem>)}
        </MenuGroup>
        <StatusGroup>
          <FaDropbox size={34} color="#2b3134" />
          <TimeMachine />
          <BluetoothIcon />
          <WifiIcon />
          <SpeakerIcon />
          <Battery>48%</Battery>
          <BatteryIcon />
          <Clock>Wed 09:54</Clock>
          <SearchIcon />
          <ListIcon />
        </StatusGroup>
      </MenuBar>

      <Window>
        <Chrome>
          <Toolbar>
            <Light $fill="#fc5b57" $rim="#e2463f" />
            <Light $fill="#fdbc40" $rim="#dfa035" />
            <Light $fill="#34c84a" $rim="#27aa35" />
            <ToolButton $w={53} $gap={10}><Chevron /></ToolButton>
            <ToolButton $w={51} $gap={2}><Chevron right /></ToolButton>
            <ToolButton><SidebarIcon /></ToolButton>
            <ToolButton $gap={408}><HandIcon /></ToolButton>
            <Address>
              <LockIcon />
              <span>intranet.eecs.qmul.ac.uk</span>
              <ReloadIcon />
            </Address>
            <ToolButton $gap={570}><ShareIcon /></ToolButton>
            <ToolButton><OverviewIcon /></ToolButton>
            <ToolButton><DownloadIcon /></ToolButton>
          </Toolbar>
          <BookmarkBar>
            <GridIcon />
            <Bookmarks>
              {bookmarks.map(([label, dark, track, nudge]) => (
                <Bookmark key={label} $dark={dark} $track={track} $nudge={nudge}>{label}</Bookmark>
              ))}
            </Bookmarks>
          </BookmarkBar>
          <TabBar>
            <Tab $w={968} $track={-0.47}>Course: School of Electronic Engineering and Computer Science School Landing Page</Tab>
            <Tab $w={944}>Ozhan Azizi - Outlook</Tab>
            <Tab $w={921} $active $track={0.15}>https://intranet.eecs.qmul.ac.uk/about</Tab>
            <Tab $w={47}><PlusIcon /></Tab>
          </TabBar>
        </Chrome>

        <Viewport>
          <Dots id="dotsLeft" width={778} offset={0} />
          <Page>
            <Header $clipped><ClosedArrow />Your Modules</Header>
            <Header $focus><OpenArrow />Your Coursework Submissions</Header>
            <Panel>
              <Notes>
                <Note>All coursework marks displayed below are provisional until they have been approved by the examination board.</Note>
                <Note>To submit a piece of coursework, you should click on the appropriate link in the 'Format' column.</Note>
                <Note>Click on the receipt number of an electronically submitted coursework to download the submitted file.</Note>
                <Note>There is a <Link $visited>coursework group system</Link> for viewing and joining groups for group courseworks.</Note>
                <Note>A '*' next to a submission date means that the date has been set individually for you.</Note>
                <Note>A '*' next to a mark indicates that a penalty was applied to the mark due to a late submission or similar problem.</Note>
                <Note>Coursework marks are not available here during and after the examination period; definitive marks are then available in <Link>mySIS</Link></Note>
                <Note>Any questions or problems regarding the information here should be directed to <Link>courseworkadministrator@eecs.qmul.ac.uk</Link></Note>
              </Notes>
              <Table>
                <colgroup>{widths.map((w, i) => <col key={i} width={w} />)}</colgroup>
                <thead><tr>{heads.map((h) => <Th key={h}>{h}</Th>)}</tr></thead>
                <tbody>
                  {rows.map(([mod, title, format, due, receipt, mark, visited]) => (
                    <Tr key={receipt}>
                      <Td>{mod}</Td>
                      <Td>{title}</Td>
                      <Td>Assignment</Td>
                      <Td>{format}</Td>
                      <Td $center>{due}</Td>
                      <Td />
                      <Td>{receipt[0] === "E" ? <Link>{receipt}</Link> : receipt}</Td>
                      <Td $center>{mark && <Link $visited={visited}>{mark}</Link>}</Td>
                    </Tr>
                  ))}
                </tbody>
              </Table>
            </Panel>
            <Header><ClosedArrow />Your Student Project</Header>
            <Header><ClosedArrow />Your Forthcoming Exercises (Lab Sessions)</Header>
          </Page>
          <Dots id="dotsRight" width={318} offset={2562 - 2388} />
        </Viewport>
        <StatusBar />
      </Window>

      <DockArea>
        <Dock>
          {dock.map(([Icon, running], i) => (
            <DockItem key={i}>
              <Icon />
              {running && <Running />}
            </DockItem>
          ))}
          <Divider />
          <DockItem><Documents /></DockItem>
          <DockItem><Trash /></DockItem>
        </Dock>
      </DockArea>
    </Desktop>
  );
}
